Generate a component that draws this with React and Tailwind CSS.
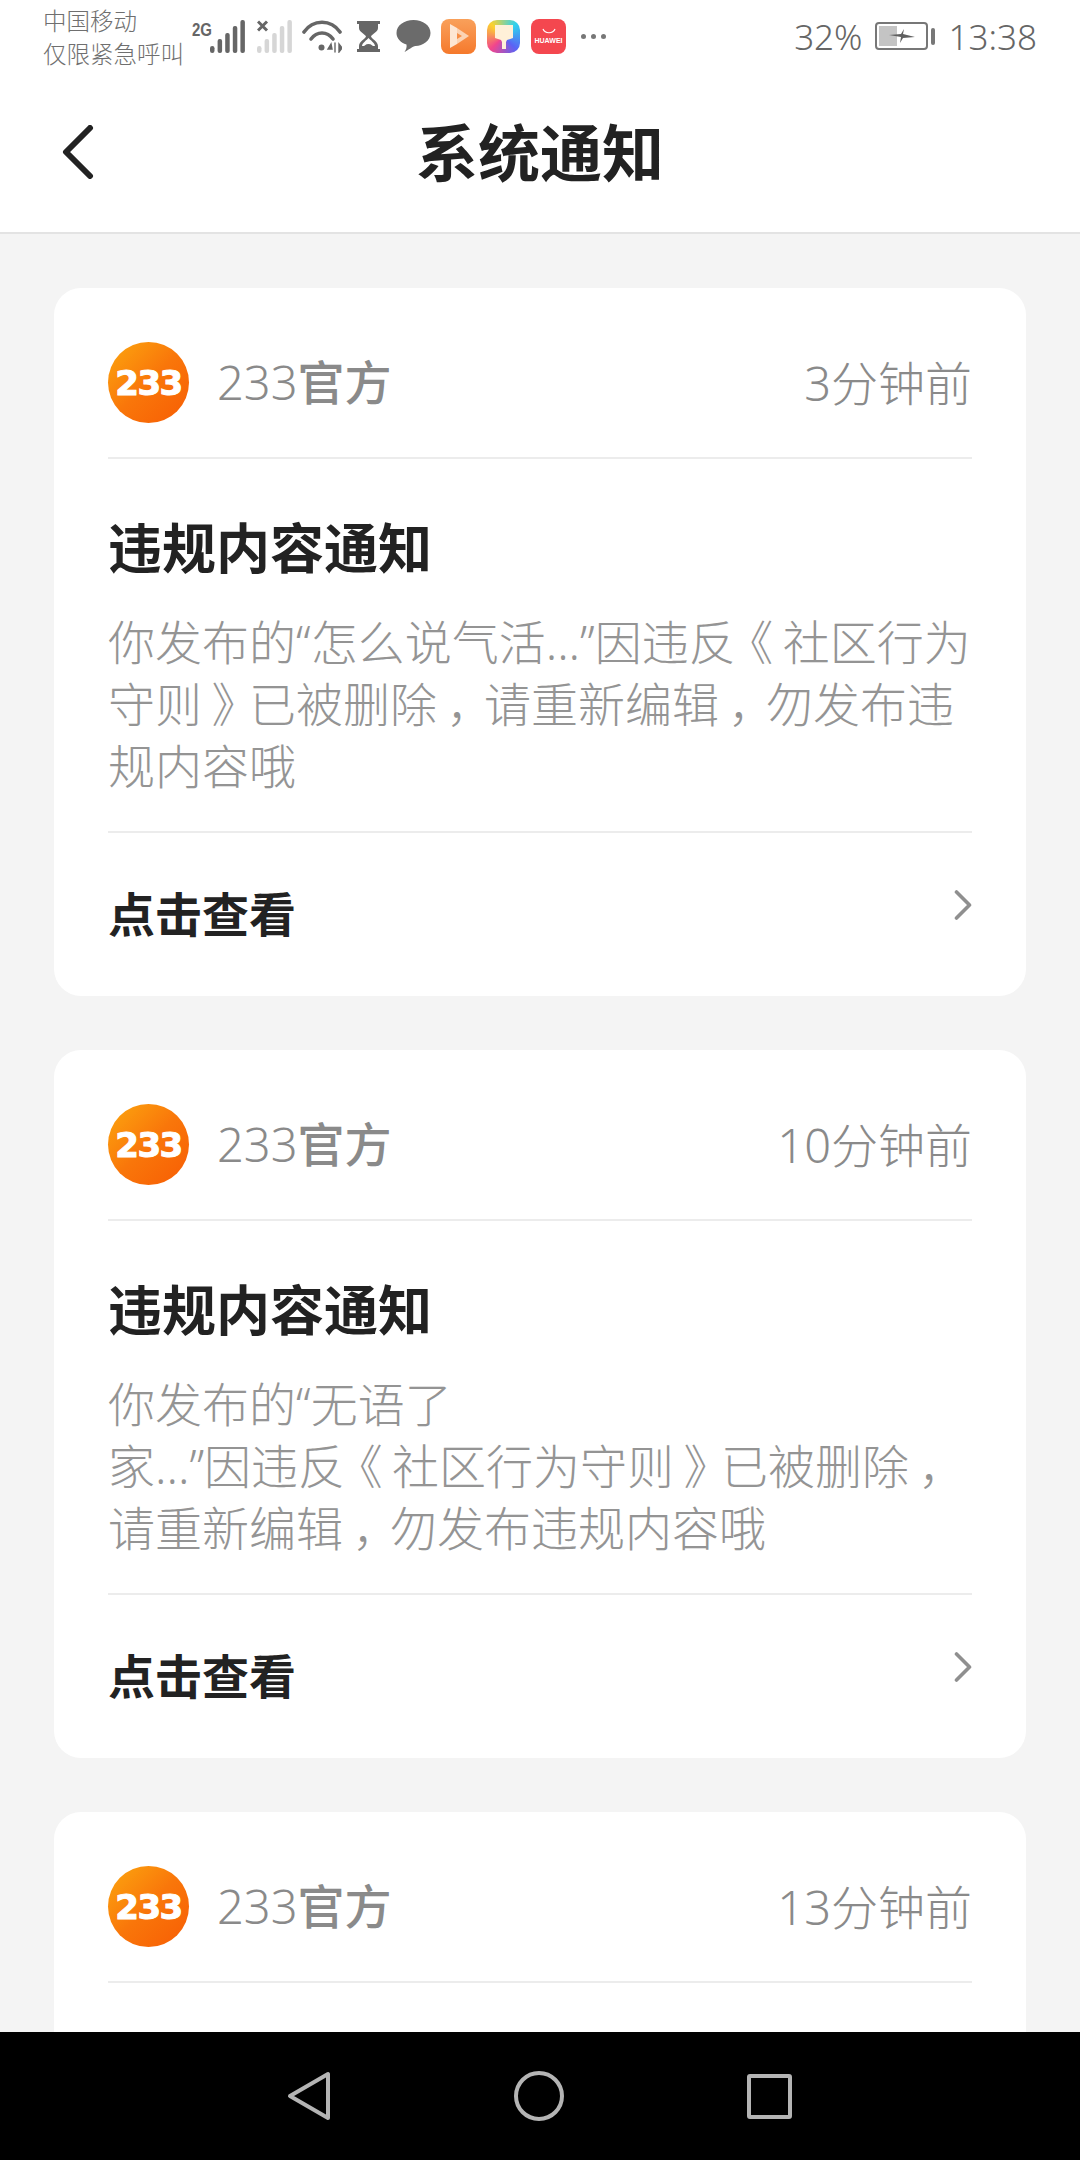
const cards = [
  { time: "3分钟前", lines: ["你发布的“怎么说气活...”因违反《社区行为", "守则》已被删除，请重新编辑，勿发布违", "规内容哦"] },
  { time: "10分钟前", lines: ["你发布的“无语了", "家...”因违反《社区行为守则》已被删除，", "请重新编辑，勿发布违规内容哦"] },
];

const punctClass = {
  "，": "ml-[0.2em] mr-[0.3em] [font-feature-settings:'halt']",
  "《": "ml-[0.3em] mr-[0.2em] [font-feature-settings:'halt']",
  "》": "ml-[0.2em] mr-[0.3em] [font-feature-settings:'halt']",
};

// the phone's font centres this punctuation in its cell
function BodyLine({ text }) {
  return (
    <div className="whitespace-nowrap">
      {text.split(/([，《》])/).map((part, i) =>
        punctClass[part] ? <span key={i} className={punctClass[part]}>{part}</span> : part
      )}
    </div>
  );
}

function Logo() {
  return (
    <div className="flex h-[81px] w-[81px] shrink-0 items-center justify-center rounded-full bg-gradient-to-br from-[#fba60f] via-[#f9760a] to-[#f75c04]">
      <span className="text-[34px] leading-none font-bold tracking-[-1.5px] text-white [-webkit-text-stroke:1px_white] [font-family:'DejaVu_Sans',sans-serif]">233</span>
    </div>
  );
}

function CardHeader({ time }) {
  return (
    <div className="flex h-[171px] items-center justify-between border-b-2 border-[#ececec] pt-[20px]">
      <div className="flex items-center gap-7">
        <Logo />
        <span className="text-[47px] leading-none text-[#8a8a8a]">
          <span className="font-light">233</span><span className="font-medium">官方</span>
        </span>
      </div>
      <span className="mt-[2px] text-[47px] leading-none font-light text-[#8a8a8a]">{time}</span>
    </div>
  );
}

function Card({ time, lines }) {
  return (
    <div className="mx-[54px] mb-[54px] rounded-[27px] bg-white px-[54px]">
      <CardHeader time={time} />
      <div className="border-b-2 border-[#ececec] pt-[49px] pb-[34px]">
        <h2 className="text-[54px] leading-[80px] font-bold text-[#222222]">违规内容通知</h2>
        <div className="mt-[23px] text-[47px] leading-[62px] font-light text-[#949494]">
          {lines.map((line) => (
            <BodyLine key={line} text={line} />
          ))}
        </div>
      </div>
      <div className="flex h-[163px] items-center justify-between">
        <span className="text-[47px] font-bold text-[#222222]">点击查看</span>
        <svg viewBox="0 0 18 30" className="-mt-5 h-[30px] w-[18px]" fill="none" stroke="#8f8f8f" strokeWidth="3.6" strokeLinecap="round" strokeLinejoin="round">
          <path d="M2.5 2l13 13-13 13" />
        </svg>
      </div>
    </div>
  );
}

function SignalBars({ fill }) {
  return (
    <g fill={fill}>
      <rect x="0" y="26" width="4.5" height="7" rx="2.2" />
      <rect x="7.6" y="19" width="4.5" height="14" rx="2" />
      <rect x="15.2" y="13" width="4.5" height="20" rx="2" />
      <rect x="22.8" y="6" width="4.5" height="27" rx="2" />
      <rect x="30.4" y="0" width="4.5" height="33" rx="2" />
    </g>
  );
}

function StatusIcons() {
  return (
    <div className="flex items-center">
      <div className="flex h-[33px] w-[53px] items-start">
        <span className="w-[18px] origin-top scale-y-125 text-[15px] leading-[15px] font-bold text-[#666666] [font-family:'Liberation_Sans',sans-serif]">2G</span>
        <svg viewBox="0 0 35 33" className="h-[33px] w-[35px]"><SignalBars fill="#666666" /></svg>
      </div>
      <svg viewBox="0 0 35 33" className="ml-[12px] h-[33px] w-[35px]">
        <SignalBars fill="#d6d6d6" />
        <rect x="0" y="0" width="12" height="13" fill="#ffffff" />
        <path d="M1 1.5l9 9M10 1.5l-9 9" stroke="#666666" strokeWidth="3" />
      </svg>
      <svg viewBox="0 0 40 33" className="ml-[10px] h-[33px] w-[40px]" fill="none" stroke="#666666" strokeWidth="3.6" strokeLinecap="round">
        <path d="M2 12C11 -1 29 -1 38 12" />
        <path d="M9 19C15 11 25 11 31 19" />
        <circle cx="19.5" cy="27.5" r="3" fill="#666666" stroke="none" />
        <path d="M29 24l-3 5h4zM33 32v-9M37 32v-8l3 4z" fill="#666666" stroke="#666666" strokeWidth="1.4" />
      </svg>
      <svg viewBox="0 0 25 31" className="ml-[14px] h-[31px] w-[25px]" fill="#666666">
        <path d="M1 0h23v3h-2v4c0 4-6 6-7 8.500 1 2.500 7 5 7 9.500v3h2v3H1v-3h2v-3c0-4.500 6-7 7-9.500C9 13 3 11 3 7V3H1z" />
        <path d="M6 25c0-3 5-6 6.500-8 1.500 2 6.500 5 6.500 8z" fill="#ffffff" />
        <path d="M6 28c1-3 4-5 6.500-5s5.500 2 6.500 5z" />
      </svg>
      <svg viewBox="0 0 34 32" className="ml-[15px] h-[32px] w-[35px]" fill="#6b6b6b">
        <path d="M17 0c9.500 0 17 5.500 17 13s-7.500 13-15 13c-3 .5-7 4-11 6 1.500-2 2.500-5 2-7.500C4 22.500 0 18.500 0 13 0 5.500 7.500 0 17 0z" />
      </svg>
      <div className="ml-[10px] flex h-[35px] w-[35px] items-center justify-center rounded-[8px] bg-gradient-to-b from-[#f9a05a] to-[#f5792b]">
        <svg viewBox="0 0 24 26" className="h-[26px] w-[24px]">
          <path d="M3 1l7 4v16l-7 4z" fill="#fde6d3" />
          <path d="M10 5l12 8-12 8v-5l5-3-5-3z" fill="#fbd3b4" />
        </svg>
      </div>
      <div className="ml-[11px] flex h-[33px] w-[33px] items-center justify-center rounded-[10px] bg-[conic-gradient(from_315deg,#fcd22e,#2fd2ee,#5a63f5,#f2458c,#fcd22e)]">
        <svg viewBox="0 0 20 26" className="h-[26px] w-[20px]">
          <path d="M1 2h18v13l-6 2-1 2v7H8v-7l-1-2-6-2z" fill="#fff0d8" />
        </svg>
      </div>
      <div className="ml-[11px] flex h-[35px] w-[35px] flex-col items-center justify-center rounded-[8px] bg-[#f4474f]">
        <svg viewBox="0 0 14 6" className="mb-[3px] h-[6px] w-[14px]" fill="none" stroke="#ffffff" strokeWidth="1.200"><path d="M1 1c2 5 10 5 12 0" /></svg>
        <span className="text-[7px] leading-none font-bold text-white [font-family:'Liberation_Sans',sans-serif]">HUAWEI</span>
      </div>
      <div className="ml-[15px] flex gap-[5px]">
        <span className="h-[5px] w-[5px] rounded-full bg-[#777777]" />
        <span className="h-[5px] w-[5px] rounded-full bg-[#777777]" />
        <span className="h-[5px] w-[5px] rounded-full bg-[#777777]" />
      </div>
    </div>
  );
}

function StatusBar() {
  return (
    <div className="flex h-[72px] items-center justify-between pr-[43px] pl-[43px]">
      <div className="flex items-center gap-[8px]">
        <div className="w-[141px] pt-[4px] text-[23.500px] leading-[33px] font-light text-[#6f6f6f]">
          <div>中国移动</div>
          <div className="whitespace-nowrap">仅限紧急呼叫</div>
        </div>
        <StatusIcons />
      </div>
      <div className="flex items-center text-[35px] leading-none font-light text-[#666666]">
        <span>32%</span>
        <div className="ml-[12px] flex items-center">
          <div className="relative h-[28px] w-[53px] rounded-[4px] border-2 border-[#777777]">
            <div className="absolute top-[2px] bottom-[2px] left-[2px] w-[18px] bg-[#c4c4c4]" />
            <svg viewBox="0 0 26 14" className="absolute top-[5px] left-[12px] h-[14px] w-[26px]"><path d="M0 6l12-1 3-5-1 5 12 3-12 1-3 5 1-6z" fill="#5f5f5f" /></svg>
          </div>
          <div className="ml-[3px] h-[17px] w-[4px] rounded-sm bg-[#777777]" />
        </div>
        <span className="ml-[14px]">13:38</span>
      </div>
    </div>
  );
}

export default function App() {
  return (
    <div className="flex h-[2160px] w-[1080px] flex-col overflow-hidden bg-[#f4f4f4] [font-family:'Noto_Sans','Noto_Sans_CJK_SC',sans-serif]">
      <div className="shrink-0 bg-white">
        <StatusBar />
        <div className="relative flex h-[162px] items-center justify-center border-b-2 border-[#e3e3e3] pt-[2px]">
          <svg viewBox="0 0 34 54" className="absolute top-[53px] left-[61px] h-[54px] w-[34px]" fill="none" stroke="#222222" strokeWidth="6" strokeLinecap="round" strokeLinejoin="round">
            <path d="M29 3L5 27l24 24" />
          </svg>
          <h1 className="text-[62px] font-bold text-[#222222]">系统通知</h1>
        </div>
      </div>
      <div className="flex-1 overflow-hidden pt-[54px]">
        {cards.map((card) => (
          <Card key={card.time} {...card} />
        ))}
        <div className="mx-[54px] h-[400px] rounded-[27px] bg-white px-[54px]">
          <CardHeader time="13分钟前" />
        </div>
      </div>
      <div className="flex h-[128px] shrink-0 items-center gap-[183px] bg-black pl-[287px]">
        <svg viewBox="0 0 44 50" className="h-[50px] w-[44px]" fill="none" stroke="#b4b4b4" strokeWidth="4" strokeLinejoin="round">
          <path d="M41 3v44L3 25z" />
        </svg>
        <svg viewBox="0 0 50 50" className="h-[50px] w-[50px]" fill="none" stroke="#b4b4b4" strokeWidth="4">
          <circle cx="25" cy="25" r="23" />
        </svg>
        <div className="h-[45px] w-[45px] rounded-[3px] border-4 border-[#b4b4b4]" />
      </div>
    </div>
  );
}
